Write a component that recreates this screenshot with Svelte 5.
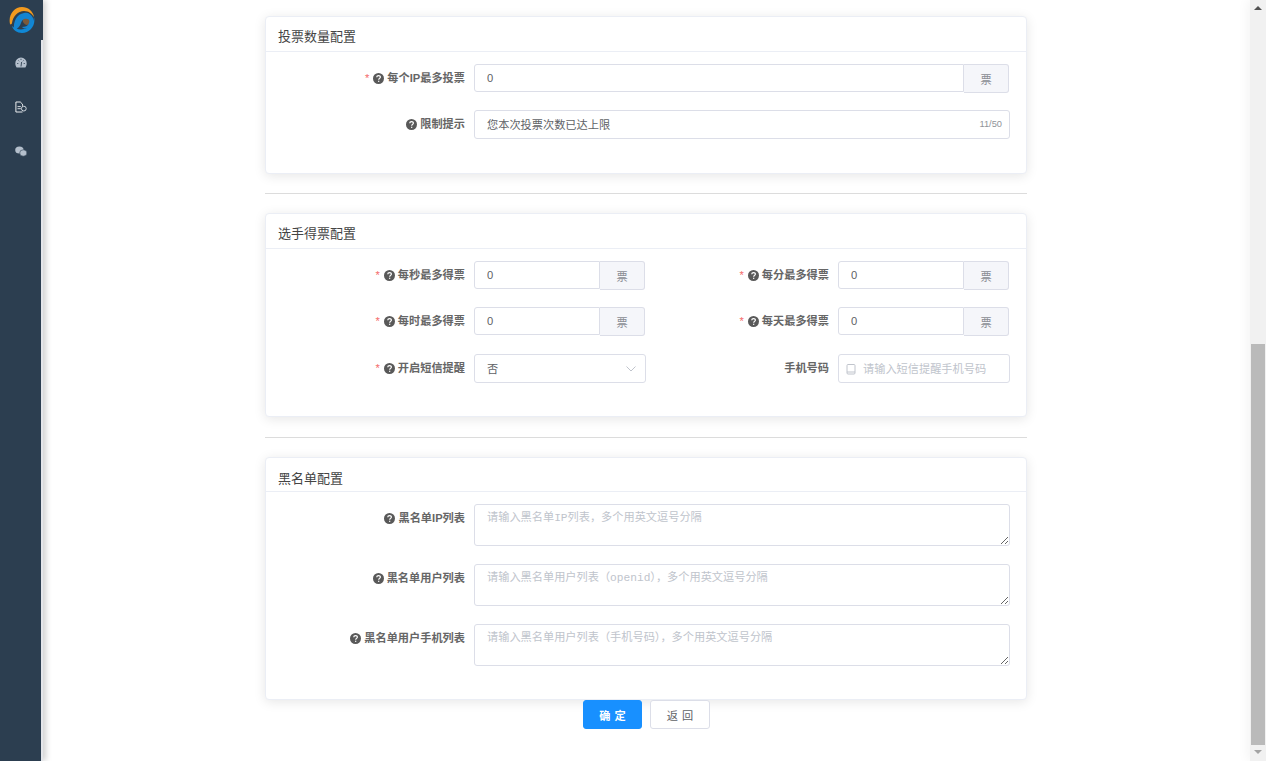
<script>
  const perSecond = [
    { label: '每秒最多得票', required: true },
    { label: '每分最多得票', required: true },
    { label: '每时最多得票', required: true },
    { label: '每天最多得票', required: true }
  ];
  const blacklist = [
    { label: '黑名单IP列表', placeholder: '请输入黑名单IP列表\uFF0C多个用英文逗号分隔' },
    { label: '黑名单用户列表', placeholder: '请输入黑名单用户列表\uFF08openid\uFF09\uFF0C多个用英文逗号分隔' },
    { label: '黑名单用户手机列表', placeholder: '请输入黑名单用户列表\uFF08手机号码\uFF09\uFF0C多个用英文逗号分隔' }
  ];
</script>

{#snippet help()}
  <svg class="help" viewBox="0 0 10 10">
    <circle cx="5" cy="5" r="5" fill="#595959" />
    <path d="M3.4 3.9c0-1 .7-1.6 1.7-1.6s1.6.6 1.6 1.4c0 1.2-1.5 1.2-1.5 2.4" fill="none" stroke="#fff" stroke-width="1.1" />
    <rect x="4.6" y="7" width="1.1" height="1.1" fill="#fff" />
  </svg>
{/snippet}

{#snippet label(text, required)}
  <div class="label">
    {#if required}<span class="star">*</span>{/if}
    {#if text !== '手机号码'}{@render help()}{/if}
    <span>{text}</span>
  </div>
{/snippet}

{#snippet unitInput()}
  <div class="group">
    <input class="input" value="0" readonly />
    <span class="addon">票</span>
  </div>
{/snippet}

<div class="layout">
  <aside class="sidebar">
    <div class="logo">
      <svg viewBox="0 0 26 26" width="26" height="26">
        <path d="M14 15c-1-3 2-6 5-5 3 1 3 5 1 7-2 2-4 1-6-2z" fill="#7a5a3c" />
        <path d="M5 23C4 14 8 7 15 6c4-1 7 1 9 5 1 3 0 7-3 9-3 2-6 2-8 0 3 0 6-1 7-4 1-2 0-4-2-4-3-1-5 1-6 4-1 3-3 6-7 7z" fill="#1584d0" />
        <path d="M25 10c2 8-4 16-12 16-5 0-9-3-10-7 3 3 8 4 12 3 5-1 9-5 10-12z" fill="#1088d6" />
        <path d="M1 17C-1 8 5 0 13 0c6 0 11 4 12 10-2-3-5-6-10-6C9 4 4 9 3 16c0 1-1.600 2-2 1z" fill="#f39a1e" />
      </svg>
    </div>
    <nav class="menu">
      <svg viewBox="0 0 12 11" width="12" height="11">
        <path d="M6 .5A5.700 5.700 0 0 0 .3 6.200c0 1.700.5 3.100 1.300 4.300h8.800c.8-1.200 1.300-2.600 1.300-4.300A5.700 5.700 0 0 0 6 .5z" fill="#b4bfcc" />
        <path d="M6 9.500 6.600 5M2.200 6.500h1.100M8.700 6.500h1.100M3.500 3.500l.7.7M8.500 3.500l-.7.7M6 1.800v1.100" stroke="#2c3e50" stroke-width=".9" fill="none" />
      </svg>
      <svg viewBox="0 0 12 12" width="12" height="12">
        <path d="M7.500 11H.9V1h4.400l2.200 2.200v1.600" fill="none" stroke="#fff" stroke-width=".9" />
        <circle cx="8.800" cy="7.600" r="2.400" fill="none" stroke="#dfe4ea" stroke-width=".9" />
        <path d="M2.500 7.700h3.300M2.500 5.600h3.300" stroke="#fff" stroke-width=".8" />
      </svg>
      <svg viewBox="0 0 12 11" width="12" height="11">
        <ellipse cx="4.400" cy="4" rx="4.200" ry="3.500" fill="#b4bfcc" />
        <ellipse cx="8.300" cy="7" rx="3.600" ry="3.200" fill="#b4bfcc" stroke="#2c3e50" stroke-width=".6" />
      </svg>
    </nav>
  </aside>

  <main class="main">
    <form class="form">
      <section class="card first">
        <h3>投票数量配置</h3>
        <div class="body">
          <div class="row">
            {@render label('每个IP最多投票', true)}
            <div class="control">{@render unitInput()}</div>
          </div>
          <div class="row">
            {@render label('限制提示', false)}
            <div class="control counted">
              <input class="input" value="您本次投票次数已达上限" readonly />
              <span class="count">11/50</span>
            </div>
          </div>
        </div>
      </section>

      <hr class="upper" />

      <section class="card middle">
        <h3>选手得票配置</h3>
        <div class="body">
          <div class="columns">
            {#each perSecond as item}
              <div class="row half">
                {@render label(item.label, item.required)}
                <div class="control">{@render unitInput()}</div>
              </div>
            {/each}
            <div class="row half">
              {@render label('开启短信提醒', true)}
              <div class="control select">
                <span>否</span>
                <svg viewBox="0 0 10 6" width="10" height="6"><path d="M.5.5 5 5 9.500.5" fill="none" stroke="#c0c4cc" /></svg>
              </div>
            </div>
            <div class="row half">
              {@render label('手机号码', false)}
              <div class="control phone">
                <svg viewBox="0 0 10 12" width="10" height="12">
                  <rect x="1" y="1.500" width="8" height="9.500" rx="1" fill="none" stroke="#c0c4cc" />
                  <path d="M1 9h8" stroke="#c0c4cc" />
                </svg>
                <input placeholder="请输入短信提醒手机号码" />
              </div>
            </div>
          </div>
        </div>
      </section>

      <hr class="lower" />

      <section class="card last">
        <h3>黑名单配置</h3>
        <div class="body">
          {#each blacklist as item}
            <div class="row tall">
              {@render label(item.label, false)}
              <div class="control"><textarea placeholder={item.placeholder}></textarea></div>
            </div>
          {/each}
        </div>
      </section>

      <div class="actions">
        <button type="button" class="primary">确 定</button>
        <button type="button">返 回</button>
      </div>
    </form>
  </main>

  <div class="scrollbar">
    <i class="arrow up"></i>
    <div class="track"><div class="thumb"></div></div>
    <i class="arrow down"></i>
  </div>
</div>

<style>
  :global(body) {
    margin: 0;
    background: #fff;
    overflow: hidden;
  }

  .layout {
    display: flex;
    height: 761px;
    overflow: hidden;
    font-family: "Liberation Sans", "Noto Sans CJK SC", sans-serif;
    font-size: 11.2px;
    color: #595959;
  }

  .sidebar {
    width: 43px;
    flex: none;
    display: flex;
    flex-direction: column;
    box-shadow: 3px 0 6px rgba(0, 0, 0, 0.18);
    z-index: 1;
  }

  .logo {
    height: 40px;
    background: #2c3e50;
    display: flex;
    justify-content: center;
    padding-top: 7px;
    box-sizing: border-box;
  }

  .menu {
    flex: 1;
    background: #2c3e50;
    border-right: 2px solid #e4e6ea;
    display: flex;
    flex-direction: column;
    align-items: center;
    gap: 33px;
    padding: 17px 0 0 1px;
  }

  .main {
    flex: 1;
    min-width: 0;
    padding-right: 1px;
  }

  .form {
    width: 762px;
    margin: 16px auto 0;
  }

  .card {
    background: #fff;
    border: 1px solid #ebeef5;
    border-radius: 4px;
    box-shadow: 0 2px 12px rgba(0, 0, 0, 0.1);
    padding-bottom: 17px;
  }

  .card.middle {
    padding-bottom: 16px;
  }

  .card.last {
    padding-bottom: 15px;
  }

  h3 {
    margin: 0;
    height: 34px;
    line-height: 39px;
    padding-left: 12px;
    font-size: 13px;
    font-weight: 400;
    color: #444;
    border-bottom: 1px solid #ebeef5;
  }

  .last h3 {
    height: 33px;
    line-height: 41px;
  }

  .body {
    padding-top: 12px;
  }

  hr {
    border: 0;
    border-top: 1px solid #dcdcdc;
    margin: 19px 0;
  }

  hr.lower {
    margin-top: 20px;
  }

  .row {
    display: flex;
    height: 29px;
    margin-bottom: 17px;
  }

  .row.tall {
    height: 42px;
    margin-bottom: 18px;
  }

  .columns {
    display: grid;
    grid-template-columns: 364px 364px;
  }

  .columns .row:nth-child(n + 3):nth-child(-n + 4) {
    margin-bottom: 18px;
  }

  .label {
    width: 199px;
    flex: none;
    display: flex;
    justify-content: flex-end;
    align-items: center;
    gap: 3px;
    font-weight: 600;
    color: #666;
    line-height: 29px;
    height: 29px;
  }

  .star {
    color: #f56c6c;
    margin-right: 1px;
    font-weight: 400;
  }

  .help {
    width: 11px;
    height: 11px;
    flex: none;
  }

  .control {
    margin-left: 9px;
    width: 536px;
    flex: none;
    display: flex;
    box-sizing: border-box;
  }

  .half .control {
    width: 172px;
  }

  .group {
    display: flex;
    flex: none;
    width: calc(100% - 1px);
    height: 29px;
  }

  .input {
    flex: 1;
    min-width: 0;
    height: 28px;
    box-sizing: border-box;
    border: 1px solid #dcdee8;
    border-radius: 3px 0 0 3px;
    padding: 0 12px;
    font: inherit;
    color: #606266;
    outline: none;
    background: #fff;
  }

  .addon {
    width: 45px;
    flex: none;
    box-sizing: border-box;
    border: 1px solid #dcdee8;
    border-left-width: 0;
    border-radius: 0 3px 3px 0;
    background: #f5f6fa;
    color: #8a8d94;
    display: flex;
    align-items: center;
    justify-content: center;
  }

  .counted {
    position: relative;
  }

  .counted .input {
    height: 29px;
    border-radius: 3px;
    padding-bottom: 2px;
  }

  .count {
    position: absolute;
    right: 8px;
    top: 9px;
    font-size: 9.3px;
    color: #909399;
  }

  .select,
  .phone {
    height: 29px;
    border: 1px solid #dcdee8;
    border-radius: 3px;
    align-items: center;
    background: #fff;
  }

  .select {
    justify-content: space-between;
    padding: 0 9px 2px 12px;
    color: #606266;
  }

  .select svg {
    margin-top: 2px;
  }

  .phone {
    padding-left: 7px;
    gap: 7px;
  }

  .phone input {
    border: 0;
    outline: none;
    padding: 0;
    font: inherit;
    min-width: 0;
    flex: 1;
  }

  .phone input::placeholder {
    color: #c0c4cc;
  }

  textarea {
    width: 100%;
    height: 42px;
    box-sizing: border-box;
    border: 1px solid #dcdee8;
    border-radius: 3px;
    padding: 5px 12px;
    font-family: "Liberation Mono", "Noto Sans CJK SC", monospace;
    font-size: 11.2px;
    line-height: 16px;
    outline: none;
    display: block;
  }

  textarea::placeholder {
    color: #c0c4cc;
  }

  .actions {
    display: flex;
    justify-content: center;
    gap: 8px;
    padding-left: 1px;
  }

  button {
    width: 60px;
    height: 29px;
    border: 1px solid #dcdee8;
    border-radius: 3px;
    background: #fff;
    color: #606266;
    font: inherit;
    padding: 0;
    word-spacing: 1px;
  }

  button.primary {
    width: 59px;
    background: #1890ff;
    border-color: #1890ff;
    color: #fff;
    font-weight: 600;
  }

  .scrollbar {
    width: 16px;
    flex: none;
    background: #f1f1f1;
    box-shadow: -2px 0 12px rgba(0, 0, 0, 0.05);
    display: flex;
    flex-direction: column;
    align-items: center;
  }

  .arrow {
    display: block;
    width: 0;
    height: 0;
    border-left: 4px solid transparent;
    border-right: 4px solid transparent;
    flex: none;
  }

  .arrow.up {
    border-bottom: 4px solid #505050;
    margin: 6px 0 7px;
  }

  .arrow.down {
    border-top: 4px solid #a3a3a3;
    margin: 5px 0 7px;
  }

  .track {
    flex: 1;
    width: 100%;
    display: flex;
    flex-direction: column;
    justify-content: flex-end;
    align-items: center;
  }

  .thumb {
    width: 14px;
    height: 401px;
    background: #bababa;
  }
</style>
